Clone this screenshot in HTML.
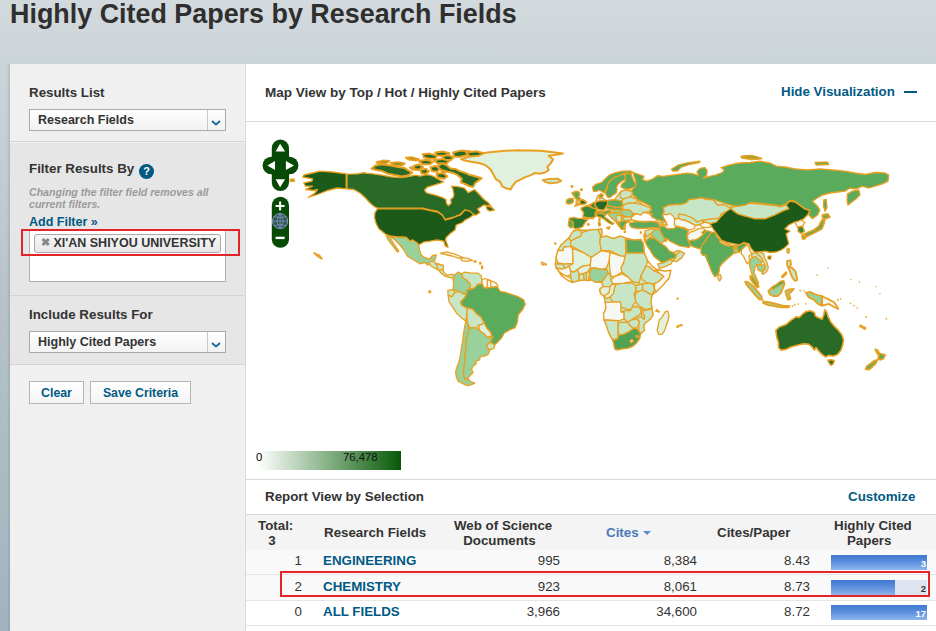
<!DOCTYPE html>
<html><head><meta charset="utf-8">
<style>
*{box-sizing:border-box;margin:0;padding:0}
html,body{width:936px;height:631px;overflow:hidden}
body{font-family:"Liberation Sans",Arial,sans-serif;background:linear-gradient(#d3dade 0,#cbd4d9 64px,#b4c1c9 330px,#a3b3bd 631px);position:relative;color:#333}
.strip{position:absolute;left:7px;top:64px;width:3px;height:567px;background:linear-gradient(90deg,rgba(90,110,125,0),rgba(90,110,125,.25))}
h1{position:absolute;left:10px;top:-1px;font-size:26.9px;font-weight:bold;color:#2f2f2f;white-space:nowrap}
.left{position:absolute;left:10px;top:64px;width:235px;height:567px;background:#f0f0f0}
.sec{position:absolute;left:0;width:235px}
.lbl{position:absolute;left:19px;font-size:13.33px;font-weight:bold;color:#333;white-space:nowrap}
.sel{position:absolute;left:19px;width:197px;height:22px;border:1px solid #a9a9a9;background:linear-gradient(#fff,#f2f2f2);font-size:12.5px;font-weight:bold;color:#333;line-height:21.5px;padding-left:8px}
.sel i{position:absolute;right:0;top:0;width:18px;height:20px;border-left:1px solid #c8c8c8}
.sel svg{position:absolute;right:4px;top:10px}
.btn{position:absolute;height:23px;border:1px solid #b5b5b5;background:linear-gradient(#fff,#f4f4f4);font-size:12.3px;font-weight:bold;color:#005a84;text-align:center;line-height:23.5px}
.main{position:absolute;left:246px;top:64px;width:690px;height:567px;background:#fff}
.t14{position:absolute;font-size:13.33px;font-weight:bold;color:#333;white-space:nowrap}
.t14.a{color:#005a84}
.hl{position:absolute;left:0;width:690px;height:1px;background:#d8d8d8}
.th{position:absolute;font-size:13.33px;font-weight:bold;color:#333;white-space:nowrap;line-height:15px}
.td{position:absolute;font-size:13.33px;color:#333;white-space:nowrap;line-height:20px}
.td.r{text-align:right}
.td.b{font-weight:bold;color:#005a84}
.bar{position:absolute;left:585px;width:96px;height:15px;background:linear-gradient(#3f78cf 0,#5b8fdd 45%,#8fb4ec 100%)}
.bar i{position:absolute;left:0;top:0;width:64px;height:15px;background:linear-gradient(#3f78cf 0,#5b8fdd 45%,#8fb4ec 100%)}
.bar b{position:absolute;right:1px;top:3px;font-size:9.5px;color:#fff;line-height:11px}
.a{color:#005a84}
</style></head><body>
<div class="strip"></div>
<h1>Highly Cited Papers by Research Fields</h1>
<div class="left">
  <div class="sec" style="top:0;height:78px;background:#f0f0f0;border-bottom:1px solid #d4d4d4"></div>
  <div class="lbl" style="top:21px">Results List</div>
  <div class="sel" style="top:45px">Research Fields<i></i><svg width="10" height="6" viewBox="0 0 10 6"><path d="M1 1 L5 4.5 L9 1" fill="none" stroke="#1a6a95" stroke-width="1.8"/></svg></div>

  <div class="sec" style="top:79px;height:153px;background:#e6e6e6;border-bottom:1px solid #d4d4d4"></div>
  <div class="lbl" style="top:97px">Filter Results By</div>
  <div style="position:absolute;left:129px;top:100px;width:15px;height:15px;border-radius:50%;background:#005a84;color:#fff;font-size:11px;font-weight:bold;text-align:center;line-height:15px">?</div>
  <div style="position:absolute;left:19px;top:123px;font-size:10.6px;font-style:italic;font-weight:bold;color:#9a9a9a;line-height:11.5px;white-space:nowrap">Changing the filter field removes all<br>current filters.</div>
  <div class="lbl a" style="top:151px;font-size:12.5px;color:#005a84">Add Filter »</div>
  <div style="position:absolute;left:19px;top:165px;width:197px;height:53px;background:#fff;border:1px solid #b0b0b0"></div>
  <div style="position:absolute;left:24px;top:170px;width:187px;height:19px;border:1px solid #aaa;border-radius:3px;background:linear-gradient(#f6f6f6,#e8e8e8);font-size:12.5px;font-weight:bold;color:#333;line-height:17px;white-space:nowrap;padding-left:6px"><span style="color:#888;font-size:11px;position:relative;top:-1px">✖</span> XI'AN SHIYOU UNIVERSITY</div>
  <div style="position:absolute;left:11px;top:165px;width:219px;height:27px;border:2px solid #e3242b"></div>

  <div class="sec" style="top:232px;height:69px;background:#e6e6e6;border-bottom:1px solid #d4d4d4"></div>
  <div class="lbl" style="top:243px">Include Results For</div>
  <div class="sel" style="top:267px">Highly Cited Papers<i></i><svg width="10" height="6" viewBox="0 0 10 6"><path d="M1 1 L5 4.5 L9 1" fill="none" stroke="#1a6a95" stroke-width="1.8"/></svg></div>

  <div class="btn" style="left:19px;top:317px;width:55px">Clear</div>
  <div class="btn" style="left:80px;top:317px;width:101px">Save Criteria</div>
</div>
<div class="main">
  <div style="position:absolute;left:-1px;top:0;width:1px;height:567px;background:#d9d9d9"></div>
  <div class="t14" style="left:19px;top:20.5px;font-size:13.5px">Map View by Top / Hot / Highly Cited Papers</div>
  <div class="t14 a" style="left:535px;top:20px">Hide Visualization</div>
  <div style="position:absolute;left:658px;top:27px;width:13px;height:2px;background:#005a84"></div>
  <div class="hl" style="top:57px"></div>
  <!--MAP--><svg style="position:absolute;left:0;top:0" width="690" height="400" viewBox="0 0 690 400" stroke="#e9a020" stroke-linejoin="round">
<path d="M441.6 175.2 L443.8 168.4 L458.8 165.4 L465.5 168.4 L473.7 175.9 L487.2 181.9 L500.7 179.7 L500.7 181.9 L495.4 186.4 L488.7 188.6 L473.7 202.8 L463.3 201.3 L455.0 184.9 L444.6 181.1Z" fill="#5aab5c" stroke-width="0.1"/>
<path d="M434.0 133.5 L469.0 135.5 L484.0 140.5 L504.0 138.0 L519.0 139.8 L540.2 139.8 L542.8 144.8 L529.0 151.0 L519.0 154.8 L481.5 146.0 L471.5 156.0 L464.0 159.8 L451.5 162.2 L434.0 164.8Z" fill="#c6e6c6" stroke-width="0.1"/>
<path d="M215.2 95.1 L223.4 92.5 L233.9 89.5 L245.9 88.0 L259.3 86.8 L271.3 86.2 L283.3 86.5 L293.7 86.8 L305.7 88.0 L316.9 89.5 L308.7 91.0 L302.7 91.7 L307.2 95.4 L304.2 99.9 L301.2 102.9 L302.7 105.9 L299.7 108.2 L293.7 109.7 L289.3 108.9 L284.8 111.1 L278.8 113.4 L274.3 115.6 L269.8 117.9 L266.8 121.6 L264.6 125.4 L260.8 124.6 L256.3 122.4 L254.1 117.9 L249.6 114.9 L247.4 110.4 L244.4 105.2 L239.9 101.4 L233.9 99.2 L224.9 97.7 L217.5 96.2Z" fill="#e0f1de" stroke-width="2.0"/>
<path d="M296.7 116.1 L302.7 114.9 L311.7 114.6 L314.7 116.4 L311.7 118.6 L304.2 119.4 L299.0 117.9Z" fill="#c6e6c6" stroke-width="1.8"/>
<path d="M125.4 104.7 L129.3 101.5 L135.7 100.2 L144.6 101.5 L152.3 103.1 L158.7 104.1 L162.6 106.6 L166.4 108.6 L162.6 111.1 L156.2 112.4 L148.5 111.1 L142.1 109.8 L136.9 107.3 L130.5 106.0Z" fill="#286a26" stroke-width="2.0"/>
<path d="M130.5 98.3 L136.9 96.6 L143.4 97.0 L140.8 98.9 L133.1 99.6Z" fill="#286a26" stroke-width="2.0"/>
<path d="M144.6 98.9 L152.3 98.3 L158.7 99.6 L156.2 101.3 L147.2 100.9Z" fill="#286a26" stroke-width="2.0"/>
<path d="M160.0 93.8 L165.2 93.2 L172.8 95.1 L170.3 96.4 L162.6 95.4Z" fill="#286a26" stroke-width="2.0"/>
<path d="M163.9 103.4 L170.3 102.8 L175.4 104.1 L172.8 106.0 L166.4 105.6Z" fill="#286a26" stroke-width="2.0"/>
<path d="M176.7 90.2 L183.2 89.6 L190.9 91.5 L189.6 94.7 L183.2 94.7 L178.0 93.4Z" fill="#286a26" stroke-width="2.0"/>
<path d="M207.0 88.5 L214.7 86.6 L223.7 87.2 L221.1 91.1 L213.4 93.0 L208.2 92.4Z" fill="#286a26" stroke-width="2.0"/>
<path d="M196.0 92.3 L202.4 91.0 L207.6 93.5 L205.0 96.1 L198.6 96.1Z" fill="#286a26" stroke-width="2.0"/>
<path d="M184.5 103.2 L189.6 101.9 L193.5 104.5 L191.5 107.7 L185.8 107.0Z" fill="#286a26" stroke-width="2.0"/>
<path d="M195.4 103.0 L199.9 102.3 L201.8 106.2 L198.6 108.7 L195.4 106.8Z" fill="#286a26" stroke-width="2.0"/>
<path d="M190.5 109.7 L196.9 109.1 L201.4 112.3 L198.2 114.8 L191.8 113.5Z" fill="#286a26" stroke-width="2.0"/>
<path d="M174.7 106.1 L179.8 104.8 L183.0 107.4 L179.8 109.9 L175.3 109.3Z" fill="#286a26" stroke-width="2.0"/>
<path d="M168.0 101.8 L173.1 100.5 L177.0 103.1 L173.1 105.7 L168.0 105.0Z" fill="#286a26" stroke-width="2.0"/>
<path d="M172.8 97.1 L180.5 95.8 L186.9 97.8 L184.3 100.3 L176.6 100.3Z" fill="#286a26" stroke-width="2.0"/>
<path d="M187.9 96.2 L195.6 94.9 L203.3 96.8 L200.7 99.4 L191.7 99.4Z" fill="#286a26" stroke-width="2.0"/>
<path d="M220.0 88.5 L230.2 87.2 L237.9 89.2 L232.8 91.7 L223.8 92.4Z" fill="#286a26" stroke-width="2.0"/>
<path d="M189.2 88.6 L196.9 87.5 L203.3 89.2 L198.2 91.8 L190.5 91.4Z" fill="#286a26" stroke-width="2.0"/>
<path d="M192.2 101.5 L196.3 99.4 L200.4 101.0 L204.5 104.6 L209.6 105.1 L213.7 107.1 L218.9 108.7 L223.0 110.7 L229.2 112.3 L235.8 114.3 L232.2 116.9 L229.2 119.0 L227.1 123.1 L223.0 122.0 L218.9 120.0 L214.8 118.4 L215.8 114.8 L211.7 111.2 L206.6 108.7 L201.4 107.7 L196.3 106.1 L193.2 104.6Z" fill="#286a26" stroke-width="2.0"/>
<path d="M101.0 110.2 L111.5 109.8 L119.0 108.5 L119.0 109.2 L126.7 109.8 L135.7 111.1 L144.6 112.8 L154.9 113.7 L163.9 112.4 L169.0 111.2 L174.7 112.2 L179.5 110.7 L184.2 111.2 L188.0 112.6 L192.8 115.5 L197.5 117.9 L193.7 119.3 L188.0 121.2 L181.4 123.1 L178.5 126.0 L180.4 128.8 L185.2 130.2 L190.9 131.7 L196.6 133.6 L199.9 135.5 L200.4 139.3 L202.3 141.7 L205.2 139.3 L204.7 135.5 L207.1 133.6 L208.0 130.7 L207.1 126.0 L205.6 122.2 L211.8 122.6 L218.5 124.1 L222.3 128.8 L228.5 125.5 L232.7 129.8 L237.5 135.0 L242.3 138.8 L245.1 142.1 L237.8 141.0 L234.0 143.5 L231.5 144.8 L234.0 148.5 L230.2 151.0 L224.0 150.5 L220.2 149.0 L219.0 146.0 L214.0 150.5 L206.5 153.5 L199.0 155.5 L196.5 151.0 L191.5 147.2 L184.0 146.0 L176.5 144.2 L131.5 144.2 L127.8 142.2 L123.5 138.5 L119.0 133.5 L114.0 129.0 L107.8 125.5 L101.0 124.8Z" fill="#286a26" stroke-width="1.3"/>
<path d="M240.2 142.2 L245.2 143.0 L248.5 146.0 L244.0 147.2 L241.0 145.5Z" fill="#286a26" stroke-width="1.3"/>
<path d="M100.2 109.8 L86.5 108.0 L74.0 107.2 L66.5 109.0 L57.8 111.0 L56.5 113.0 L66.5 114.8 L66.0 117.2 L57.8 119.0 L59.5 122.2 L66.5 122.2 L59.5 125.5 L67.8 126.5 L71.5 125.5 L69.0 129.0 L62.0 133.5 L71.5 130.5 L81.5 126.5 L91.5 124.0 L100.2 124.8Z" fill="#1c5a1a" stroke-width="1.3"/>
<path d="M131.5 144.8 L176.5 144.8 L184.0 146.5 L191.5 148.0 L196.5 151.5 L199.0 156.0 L206.5 154.0 L214.5 151.0 L219.0 146.0 L224.0 147.2 L227.8 150.5 L224.0 153.5 L219.0 156.0 L216.5 158.5 L210.2 161.0 L209.0 166.0 L204.0 169.8 L200.2 173.5 L199.5 176.0 L201.5 181.0 L202.0 183.5 L199.5 182.2 L197.8 177.2 L191.5 176.0 L184.0 177.2 L177.8 178.0 L172.8 181.0 L171.0 179.0 L166.5 176.0 L164.0 177.2 L160.2 173.5 L151.5 173.0 L144.0 172.2 L139.0 169.8 L132.8 164.8 L130.2 159.8 L128.5 153.5 L129.0 148.5Z" fill="#1c5a1a" stroke-width="1.3"/>
<path d="M144.0 172.2 L151.5 173.0 L160.2 173.5 L164.0 177.2 L166.5 176.0 L171.0 179.0 L172.8 181.0 L173.5 186.0 L175.2 191.0 L179.0 194.0 L184.0 194.8 L186.5 191.5 L190.2 191.0 L189.0 196.0 L185.2 199.0 L181.5 201.0 L179.0 198.5 L174.0 199.8 L167.8 196.0 L161.5 192.2 L157.8 186.0 L154.0 181.0 L149.0 176.0Z" fill="#98d29a" stroke-width="1.3"/>
<path d="M140.2 171.0 L144.0 173.5 L147.8 179.8 L152.8 187.2 L151.5 188.0 L145.2 179.8 L141.5 174.8Z" fill="#98d29a" stroke-width="1.3"/>
<path d="M182.5 198.5 L186.8 197.0 L190.0 199.5 L194.3 200.6 L197.5 201.7 L197.0 205.9 L198.5 209.2 L201.8 211.3 L206.0 210.2 L208.2 211.3 L207.1 214.1 L202.8 213.4 L198.5 211.9 L195.3 209.2 L192.1 205.9 L187.9 203.8 L184.6 201.7Z" fill="#c6e6c6" stroke-width="1.3"/>
<path d="M190.0 199.5 L194.3 200.6 L197.5 201.7 L197.0 205.9 L192.1 205.9Z" fill="#c6e6c6" stroke-width="1.3"/>
<path d="M194.3 189.3 L200.7 187.8 L208.2 189.9 L213.5 192.0 L217.8 194.2 L212.4 194.2 L206.0 192.0 L199.6 190.5Z" fill="#f6f8f4" stroke-width="1.3"/>
<path d="M214.6 194.2 L221.0 194.2 L226.4 196.3 L221.0 197.4 L215.7 196.7Z" fill="#f6f8f4" stroke-width="1.3"/>
<path d="M228.1 197.0 L230.0 197.0 L230.0 198.0 L228.1 198.0Z" fill="#f6f8f4" stroke-width="1.3"/>
<path d="M233.8 198.5 L234.9 198.5 L234.9 200.0 L233.8 200.0Z" fill="#f6f8f4" stroke-width="1.3"/>
<path d="M235.6 202.1 L236.6 202.1 L236.6 204.7 L235.6 204.7Z" fill="#f6f8f4" stroke-width="1.3"/>
<path d="M182.9 226.9 L184.6 226.9 L184.6 228.6 L182.9 228.6Z" fill="#f6f8f4" stroke-width="1.3"/>
<path d="M295.4 198.2 L298.4 199.1 L297.6 201.2 L295.9 200.4Z" fill="#f6f8f4" stroke-width="1.3"/>
<path d="M215.7 209.8 L218.9 208.1 L225.3 209.2 L231.7 209.2 L234.9 211.3 L236.0 215.6 L236.0 219.9 L231.7 220.5 L228.5 224.1 L224.2 224.8 L224.2 219.9 L221.0 216.6 L216.7 213.4Z" fill="#c6e6c6" stroke-width="1.3"/>
<path d="M236.0 215.6 L239.2 214.5 L244.5 216.6 L249.9 218.8 L252.0 222.0 L251.0 222.6 L244.5 223.5 L238.1 224.1 L236.0 219.9Z" fill="#f6f8f4" stroke-width="1.3"/>
<path d="M241.3 215.8 L244.5 216.6 L245.0 223.5 L241.3 223.9Z" fill="#f6f8f4" stroke-width="1.3"/>
<path d="M208.2 211.3 L212.4 208.1 L215.7 209.8 L216.7 213.4 L221.0 216.6 L224.2 219.9 L223.6 224.8 L221.0 226.3 L220.6 230.5 L216.7 229.5 L212.4 227.3 L207.1 225.6 L207.7 219.9 L207.1 215.6Z" fill="#98d29a" stroke-width="1.3"/>
<path d="M201.8 226.3 L207.1 225.6 L209.2 228.4 L206.0 232.7 L202.2 231.6Z" fill="#c6e6c6" stroke-width="1.3"/>
<path d="M202.2 231.6 L206.0 232.7 L209.2 228.4 L212.4 227.3 L216.7 229.5 L220.6 230.5 L217.8 234.8 L214.6 238.0 L215.7 241.2 L221.0 244.0 L221.0 249.8 L219.9 257.3 L215.7 254.1 L210.3 248.7 L206.0 242.3 L202.8 237.0Z" fill="#c6e6c6" stroke-width="1.3"/>
<path d="M221.0 244.0 L226.4 244.9 L229.6 248.7 L234.9 253.0 L238.1 258.4 L236.0 260.5 L232.8 261.1 L230.6 263.7 L224.2 264.1 L222.1 260.5 L221.0 254.1 L221.0 249.8Z" fill="#c6e6c6" stroke-width="1.3"/>
<path d="M232.8 261.1 L236.0 260.5 L238.1 258.4 L241.3 264.8 L244.5 268.0 L245.6 272.3 L241.3 273.3 L238.1 270.1 L233.8 266.9Z" fill="#e0f1de" stroke-width="1.3"/>
<path d="M219.9 257.3 L222.1 260.5 L223.1 264.8 L221.4 272.3 L220.0 276.0 L220.0 283.9 L219.2 291.9 L218.4 299.8 L217.6 306.1 L217.6 311.7 L219.2 315.6 L221.6 314.8 L224.7 317.5 L228.7 319.1 L225.5 320.7 L221.6 321.7 L216.8 319.6 L212.1 317.2 L210.2 312.5 L209.7 307.7 L210.8 303.7 L212.8 298.2 L214.4 291.1 L215.5 283.9 L216.8 276.0 L217.8 268.0 L218.9 261.6Z" fill="#98d29a" stroke-width="1.3"/>
<path d="M224.2 264.1 L230.6 263.7 L233.8 266.9 L238.1 270.1 L241.3 273.3 L245.6 272.3 L244.5 278.2 L241.3 280.8 L240.7 283.0 L243.8 286.3 L242.2 290.3 L239.0 291.9 L234.3 292.6 L233.5 295.8 L229.5 297.4 L230.3 299.8 L227.1 302.2 L225.5 305.3 L227.1 308.5 L223.9 311.7 L221.6 314.8 L219.2 315.6 L217.6 311.7 L217.6 306.1 L218.4 299.8 L219.2 291.9 L220.0 283.9 L220.0 276.0 L221.4 272.3 L223.1 264.8Z" fill="#98d29a" stroke-width="1.3"/>
<path d="M241.3 280.8 L244.5 278.2 L248.8 280.8 L247.7 284.7 L243.5 285.5 L240.7 283.0Z" fill="#c6e6c6" stroke-width="1.3"/>
<path d="M221.0 226.3 L228.5 224.1 L231.7 220.5 L236.0 219.9 L238.1 224.1 L244.5 223.5 L251.0 222.6 L254.2 227.3 L259.5 228.4 L265.9 230.5 L272.3 232.7 L277.7 235.9 L279.2 240.2 L276.6 245.5 L272.3 250.9 L271.3 258.4 L269.1 263.7 L263.8 265.8 L258.4 269.0 L255.2 274.4 L251.0 278.7 L248.8 280.8 L244.5 278.2 L246.7 273.3 L244.5 268.0 L241.3 264.8 L238.1 258.4 L234.9 253.0 L229.6 248.7 L226.4 244.9 L221.0 244.0 L215.7 241.2 L214.6 238.0 L217.8 234.8 L220.6 230.5Z" fill="#5aab5c" stroke-width="1.3"/>
<path d="M327.2 167.0 L333.2 165.8 L343.5 166.1 L352.0 165.3 L355.5 164.8 L356.3 169.6 L354.6 173.0 L360.6 172.1 L367.4 174.7 L374.3 172.1 L379.4 173.8 L388.0 176.1 L394.8 175.5 L397.4 179.8 L398.2 189.2 L401.7 196.9 L405.1 201.2 L410.2 205.5 L418.8 207.2 L424.8 206.3 L423.1 214.0 L417.1 220.9 L410.2 227.7 L405.9 231.2 L405.1 238.0 L405.9 244.0 L406.3 244.8 L406.9 251.3 L403.9 255.4 L399.2 258.9 L397.5 262.4 L398.6 266.0 L394.5 270.1 L393.4 274.8 L390.4 278.9 L386.3 282.4 L381.6 284.2 L375.7 284.8 L371.6 285.9 L368.7 284.8 L368.1 280.7 L366.9 276.5 L362.8 268.9 L360.5 261.9 L358.1 256.0 L357.5 250.1 L359.9 244.2 L359.3 238.4 L358.9 238.0 L358.0 232.0 L354.6 229.4 L353.8 225.2 L357.2 222.6 L355.5 218.3 L349.5 218.3 L345.2 215.8 L342.6 216.6 L338.4 215.8 L332.9 216.6 L326.4 218.3 L321.2 215.8 L316.1 212.3 L313.5 208.1 L310.1 203.8 L309.3 200.0 L310.1 193.5 L311.8 186.7 L315.3 180.7 L323.0 173.8Z" fill="#c6e6c6" stroke-width="1.3"/>
<path d="M327.2 167.0 L333.2 165.8 L335.8 168.7 L334.9 172.1 L329.8 174.3 L324.7 177.3 L323.0 173.8Z" fill="#c6e6c6" stroke-width="1.3"/>
<path d="M311.8 186.7 L315.3 180.7 L323.0 173.8 L324.7 177.3 L324.7 182.4 L317.8 183.2 L317.0 186.7Z" fill="#c6e6c6" stroke-width="1.3"/>
<path d="M335.8 168.7 L343.5 166.1 L352.0 165.3 L354.6 171.3 L353.8 178.1 L355.5 186.7 L345.2 193.5 L338.4 189.2 L324.7 181.5 L324.7 177.3 L329.8 174.3 L334.9 172.1Z" fill="#c6e6c6" stroke-width="1.3"/>
<path d="M352.0 165.3 L355.5 164.8 L356.3 169.6 L354.6 173.0 L354.6 171.3Z" fill="#c6e6c6" stroke-width="1.3"/>
<path d="M354.6 173.0 L360.6 172.1 L367.4 174.7 L374.3 172.1 L379.4 173.8 L379.8 192.7 L374.3 191.8 L364.0 186.7 L355.5 186.7 L353.8 178.1Z" fill="#c6e6c6" stroke-width="1.3"/>
<path d="M379.8 175.0 L388.0 176.1 L394.8 175.5 L397.4 179.8 L398.2 189.2 L380.8 189.2Z" fill="#5aab5c" stroke-width="1.3"/>
<path d="M311.8 186.7 L317.0 186.7 L317.8 183.2 L324.7 182.4 L326.4 184.1 L327.2 199.5 L317.0 200.0 L311.8 198.6 L310.1 193.5Z" fill="#f6f8f4" stroke-width="1.3"/>
<path d="M326.4 184.1 L338.4 189.2 L345.2 193.5 L344.3 201.2 L336.6 202.1 L331.5 205.5 L328.1 208.1 L324.7 207.2 L323.0 202.1 L327.2 199.5Z" fill="#e0f1de" stroke-width="1.3"/>
<path d="M345.2 193.5 L355.5 186.7 L364.0 188.4 L363.2 196.9 L360.6 203.8 L355.5 205.5 L348.6 203.8 L344.3 203.8 L344.3 201.2Z" fill="#f6f8f4" stroke-width="1.3"/>
<path d="M364.0 188.4 L374.3 191.8 L379.8 192.7 L377.7 198.6 L375.1 203.8 L376.0 208.1 L369.2 212.3 L364.9 212.3 L364.0 206.3 L363.2 196.9Z" fill="#f6f8f4" stroke-width="1.3"/>
<path d="M379.8 189.2 L398.2 189.2 L401.7 196.9 L400.0 202.1 L397.4 207.2 L394.8 212.3 L393.1 219.2 L386.3 217.5 L381.1 212.3 L376.0 208.1 L375.1 203.8 L377.7 198.6Z" fill="#c6e6c6" stroke-width="1.3"/>
<path d="M401.7 196.9 L405.1 201.2 L410.2 205.5 L408.5 207.2 L403.4 202.9 L400.0 202.1Z" fill="#f6f8f4" stroke-width="1.3"/>
<path d="M400.0 202.1 L403.4 202.9 L408.5 207.2 L412.8 208.9 L417.9 212.3 L412.8 217.5 L406.8 220.0 L401.7 219.2 L396.5 215.8 L394.8 212.3 L397.4 207.2Z" fill="#c6e6c6" stroke-width="1.3"/>
<path d="M410.2 205.5 L418.8 207.2 L424.8 206.3 L423.1 214.0 L417.1 220.9 L410.2 227.7 L408.5 225.2 L408.5 220.0 L412.8 217.5 L417.9 212.3 L412.8 208.9Z" fill="#f6f8f4" stroke-width="1.3"/>
<path d="M396.5 220.0 L401.7 219.2 L406.8 220.0 L408.5 225.2 L405.9 231.2 L401.7 228.6 L396.5 226.0Z" fill="#c6e6c6" stroke-width="1.3"/>
<path d="M389.7 221.7 L396.5 220.0 L396.5 226.0 L392.3 227.7 L389.7 226.9Z" fill="#c6e6c6" stroke-width="1.3"/>
<path d="M389.7 229.4 L392.3 227.7 L396.5 226.0 L401.7 228.6 L405.9 231.2 L405.1 238.0 L405.9 244.0 L400.0 245.7 L394.8 243.1 L389.7 238.0 L388.8 232.9Z" fill="#c6e6c6" stroke-width="1.3"/>
<path d="M370.0 220.0 L377.7 219.2 L386.3 219.2 L389.7 221.7 L389.7 226.9 L388.0 229.4 L388.8 232.9 L389.7 238.0 L386.3 241.4 L388.0 246.6 L384.6 245.7 L379.4 244.8 L374.3 242.3 L374.3 238.9 L367.4 238.0 L364.9 235.4 L364.0 232.9 L367.4 229.4 L368.3 224.3Z" fill="#c6e6c6" stroke-width="1.3"/>
<path d="M364.9 215.8 L369.2 212.3 L376.0 209.8 L381.1 212.3 L386.3 217.5 L377.7 219.2 L370.0 220.0 L366.6 220.0Z" fill="#f6f8f4" stroke-width="1.3"/>
<path d="M344.3 205.5 L348.6 203.8 L355.5 205.5 L360.6 205.1 L362.3 208.9 L358.9 214.0 L355.5 217.5 L349.5 218.3 L345.2 215.8 L343.1 212.3Z" fill="#98d29a" stroke-width="1.3"/>
<path d="M362.3 208.9 L364.9 212.3 L364.9 215.8 L366.6 220.0 L364.0 222.6 L357.2 222.6 L355.5 218.3 L358.9 214.0Z" fill="#c6e6c6" stroke-width="1.3"/>
<path d="M353.8 225.2 L357.2 222.6 L364.0 222.6 L366.6 220.0 L370.0 220.0 L368.3 224.3 L367.4 229.4 L364.0 232.9 L360.6 234.6 L358.0 232.0 L354.6 229.4Z" fill="#e0f1de" stroke-width="1.3"/>
<path d="M357.2 222.6 L364.0 222.6 L363.2 228.6 L358.0 232.0 L354.6 229.4 L353.8 225.2Z" fill="#e0f1de" stroke-width="1.3"/>
<path d="M309.3 200.0 L317.0 200.0 L318.7 204.6 L314.4 205.1 L310.1 203.8Z" fill="#c6e6c6" stroke-width="1.3"/>
<path d="M310.1 203.8 L314.4 205.1 L318.7 204.6 L323.0 202.1 L324.7 207.2 L324.7 210.6 L321.2 212.3 L317.0 210.6 L313.5 208.1Z" fill="#f6f8f4" stroke-width="1.3"/>
<path d="M324.7 210.6 L324.7 207.2 L328.1 208.1 L331.5 205.5 L333.2 210.6 L332.9 216.6 L326.4 218.3 L324.7 214.0Z" fill="#c6e6c6" stroke-width="1.3"/>
<path d="M331.5 205.5 L336.6 202.1 L344.3 201.2 L344.3 203.8 L341.8 208.1 L333.2 210.6Z" fill="#e0f1de" stroke-width="1.3"/>
<path d="M333.2 210.6 L337.5 209.8 L338.4 215.8 L332.9 216.6Z" fill="#c6e6c6" stroke-width="1.3"/>
<path d="M337.5 209.8 L341.8 208.1 L344.3 205.5 L343.1 212.3 L342.6 216.6 L338.4 215.8Z" fill="#c6e6c6" stroke-width="1.3"/>
<path d="M340.1 209.3 L341.8 208.1 L344.3 205.5 L343.1 212.3 L342.6 216.6 L340.6 216.1Z" fill="#c6e6c6" stroke-width="1.3"/>
<path d="M313.5 208.1 L317.0 210.6 L321.2 212.3 L324.7 214.0 L326.4 218.3 L321.2 215.8 L316.1 212.3Z" fill="#f6f8f4" stroke-width="1.3"/>
<path d="M308.8 179.0 L309.8 179.0 L309.8 180.0 L308.8 180.0Z" fill="#f6f8f4" stroke-width="1.3"/>
<path d="M299.3 199.8 L300.4 199.8 L300.4 200.9 L299.3 200.9Z" fill="#f6f8f4" stroke-width="1.3"/>
<path d="M410.6 246.0 L411.6 246.0 L411.6 247.1 L410.6 247.1Z" fill="#f6f8f4" stroke-width="1.3"/>
<path d="M431.1 234.1 L432.1 234.1 L432.1 235.1 L431.1 235.1Z" fill="#f6f8f4" stroke-width="1.3"/>
<path d="M432.0 261.4 L433.0 261.4 L433.0 262.5 L432.0 262.5Z" fill="#f6f8f4" stroke-width="1.3"/>
<path d="M434.9 260.6 L435.9 260.6 L435.9 261.6 L434.9 261.6Z" fill="#f6f8f4" stroke-width="1.3"/>
<path d="M359.3 238.4 L374.6 237.8 L375.1 247.8 L378.1 248.3 L378.1 254.8 L373.4 256.6 L358.1 256.0 L357.5 250.1 L359.9 244.2Z" fill="#f6f8f4" stroke-width="1.3"/>
<path d="M358.1 256.0 L372.2 256.9 L372.2 266.0 L371.6 274.8 L366.3 275.4 L362.8 268.9 L360.5 261.9Z" fill="#c6e6c6" stroke-width="1.3"/>
<path d="M372.2 259.5 L374.6 258.3 L381.6 258.3 L384.5 261.9 L387.5 264.2 L384.0 267.1 L378.1 270.1 L372.8 271.3 L372.2 266.0Z" fill="#c6e6c6" stroke-width="1.3"/>
<path d="M381.6 258.3 L385.1 256.0 L390.4 254.8 L393.4 257.2 L392.8 261.3 L390.4 263.6 L387.5 264.2 L384.5 261.9Z" fill="#c6e6c6" stroke-width="1.3"/>
<path d="M375.1 247.8 L379.3 246.6 L384.5 246.6 L386.3 243.1 L391.0 242.5 L394.5 244.8 L395.1 248.9 L392.2 251.9 L388.7 253.6 L385.1 256.0 L381.6 258.3 L378.1 254.8 L378.1 248.3Z" fill="#c6e6c6" stroke-width="1.3"/>
<path d="M395.1 247.2 L400.4 246.0 L406.3 244.8 L406.9 251.3 L403.9 255.4 L399.2 258.9 L397.5 262.4 L398.6 266.0 L394.5 269.5 L392.8 267.1 L392.8 261.3 L393.4 257.2 L390.4 254.8 L395.1 252.5 L398.1 255.4 L398.6 252.5 L396.3 248.9Z" fill="#c6e6c6" stroke-width="1.3"/>
<path d="M394.5 244.2 L396.3 244.8 L396.9 248.9 L398.6 252.5 L398.1 255.4 L396.3 253.6 L395.1 248.9Z" fill="#c6e6c6" stroke-width="1.3"/>
<path d="M366.9 276.5 L371.6 274.8 L372.8 271.3 L378.1 270.1 L384.0 267.1 L387.5 264.8 L390.4 264.2 L392.8 267.1 L394.5 270.1 L393.4 274.8 L390.4 278.9 L386.3 282.4 L381.6 284.2 L375.7 284.8 L371.6 285.9 L368.7 284.8 L368.1 280.7Z" fill="#4fa353" stroke-width="1.3"/>
<path d="M383.7 276.5 L386.3 275.4 L387.7 277.1 L385.1 278.9Z" fill="#f6f8f4" stroke-width="1.3"/>
<path d="M390.2 271.3 L391.9 271.3 L391.9 273.4 L390.2 273.4Z" fill="#f6f8f4" stroke-width="1.3"/>
<path d="M419.2 247.8 L421.6 247.2 L423.0 251.3 L422.2 256.0 L420.4 261.3 L418.6 266.6 L416.3 270.1 L412.8 270.3 L411.2 266.6 L412.2 261.3 L413.3 256.0 L415.7 253.6 L417.5 250.7Z" fill="#e0f1de" stroke-width="1.3"/>
<path d="M410.0 246.3 L411.2 246.3 L411.2 247.3 L410.0 247.3Z" fill="#f6f8f4" stroke-width="1.3"/>
<path d="M411.9 247.2 L413.1 247.2 L413.1 248.0 L411.9 248.0Z" fill="#f6f8f4" stroke-width="1.3"/>
<path d="M431.0 262.3 L432.1 262.3 L432.1 263.3 L431.0 263.3Z" fill="#f6f8f4" stroke-width="1.3"/>
<path d="M434.1 260.8 L435.3 260.8 L435.3 261.7 L434.1 261.7Z" fill="#f6f8f4" stroke-width="1.3"/>
<path d="M601.5 129.8 L606.5 127.2 L612.8 126.0 L614.0 131.0 L610.2 134.8 L605.2 138.5 L602.0 141.0 L601.0 136.0Z" fill="#5aab5c" stroke-width="1.3"/>
<path d="M577.8 136.0 L580.2 135.5 L581.0 143.5 L579.0 147.2 L577.5 142.2Z" fill="#5aab5c" stroke-width="1.3"/>
<path d="M495.2 92.2 L506.5 91.5 L515.2 94.8 L505.2 95.5 L496.5 94.0Z" fill="#5aab5c" stroke-width="1.3"/>
<path d="M569.0 98.5 L581.5 98.0 L582.8 100.5 L570.2 101.0Z" fill="#5aab5c" stroke-width="1.3"/>
<path d="M516.5 103.5 L526.5 101.5 L527.8 103.5Z" fill="#5aab5c" stroke-width="1.3"/>
<path d="M484.0 143.5 L491.5 142.2 L499.0 141.0 L504.0 139.0 L511.5 139.8 L519.0 140.5 L529.0 141.5 L534.0 143.0 L540.2 141.0 L542.8 144.8 L536.5 147.2 L529.0 151.0 L519.0 154.8 L509.0 154.8 L499.0 152.2 L491.5 149.8 L486.5 146.0Z" fill="#c6e6c6" stroke-width="1.3"/>
<path d="M464.0 159.8 L471.5 156.0 L476.5 151.0 L481.5 146.0 L485.2 144.8 L487.8 147.2 L491.5 149.8 L499.0 152.2 L509.0 154.8 L519.0 154.8 L529.0 151.0 L536.5 147.2 L542.8 144.8 L540.2 140.5 L544.0 137.2 L549.0 138.0 L554.0 141.5 L559.0 145.2 L564.0 146.5 L561.5 151.0 L557.8 154.8 L552.8 157.2 L547.8 158.5 L542.8 161.0 L539.0 164.8 L544.0 167.2 L540.2 169.8 L541.5 174.8 L542.8 179.8 L539.0 183.5 L535.2 186.0 L530.2 188.0 L524.0 188.5 L519.0 187.2 L514.0 188.0 L509.0 188.5 L505.2 184.8 L502.8 179.8 L497.8 178.5 L494.0 181.0 L487.8 179.8 L481.5 178.5 L475.2 176.0 L471.5 171.0 L467.8 166.0Z" fill="#1c5a1a" stroke-width="1.3"/>
<path d="M541.0 184.8 L543.5 184.8 L543.0 189.0 L541.0 188.5Z" fill="#98d29a" stroke-width="1.3"/>
<path d="M522.0 192.2 L525.2 192.2 L524.5 195.2 L522.0 194.8Z" fill="#1c5a1a" stroke-width="1.3"/>
<path d="M549.0 158.5 L555.2 156.0 L559.0 158.5 L556.5 162.2 L551.5 163.0Z" fill="#f6f8f4" stroke-width="1.3"/>
<path d="M552.0 163.0 L556.5 162.2 L558.5 167.2 L555.2 169.8 L552.0 167.2Z" fill="#3a8a3a" stroke-width="1.3"/>
<path d="M556.5 171.0 L561.5 168.5 L567.8 166.0 L572.8 162.2 L576.0 156.0 L579.0 154.8 L577.8 159.8 L576.0 164.8 L571.5 167.2 L566.5 169.8 L561.5 172.2 L557.8 174.0Z" fill="#5aab5c" stroke-width="1.8"/>
<path d="M576.5 151.0 L581.5 149.8 L584.0 153.0 L579.0 154.8 L576.5 153.5Z" fill="#5aab5c" stroke-width="1.8"/>
<path d="M556.0 172.2 L559.5 171.5 L559.0 174.8 L556.5 174.8Z" fill="#5aab5c" stroke-width="1.8"/>
<path d="M386.8 108.4 L391.6 110.0 L398.0 112.4 L396.4 115.6 L401.2 117.2 L406.9 114.8 L411.7 111.6 L417.3 112.4 L422.1 111.6 L428.5 110.8 L434.9 110.0 L441.3 109.2 L447.7 110.0 L452.5 111.6 L450.9 107.6 L454.1 104.4 L458.9 103.6 L461.3 106.8 L460.5 111.6 L457.3 114.0 L463.7 112.4 L470.2 110.8 L476.6 108.4 L478.2 106.0 L475.0 103.6 L483.0 101.2 L489.4 99.6 L494.0 99.0 L504.0 98.5 L514.0 97.2 L524.0 99.0 L530.2 102.2 L539.0 103.0 L549.0 104.8 L561.5 106.0 L574.0 104.8 L586.5 106.0 L599.0 107.2 L609.0 109.0 L619.0 110.5 L629.0 108.5 L639.0 109.0 L642.8 111.0 L642.0 117.2 L636.5 119.8 L629.0 122.2 L622.8 124.0 L616.5 122.2 L610.2 124.8 L604.0 124.0 L599.0 127.2 L591.5 128.0 L584.0 129.0 L576.5 131.0 L570.2 134.8 L566.5 137.2 L571.5 142.2 L574.0 146.0 L571.5 151.0 L566.5 154.8 L562.8 151.0 L564.0 146.0 L559.0 144.8 L554.0 141.0 L549.0 137.2 L544.0 136.5 L540.2 139.8 L534.0 142.2 L529.0 141.0 L519.0 139.8 L511.5 139.0 L504.0 138.5 L499.0 141.0 L491.5 142.2 L484.0 141.0 L476.5 138.5 L469.0 136.0 L461.5 134.8 L455.7 133.8 L449.3 134.9 L442.9 135.7 L440.5 138.9 L434.9 140.5 L428.5 140.5 L422.1 141.3 L417.3 143.7 L418.1 147.7 L416.5 150.1 L417.3 153.3 L419.7 157.3 L415.7 156.8 L410.9 155.7 L406.1 154.9 L404.4 152.0 L406.9 150.1 L402.8 149.3 L405.2 146.1 L404.4 142.1 L398.0 138.9 L391.6 135.7 L389.2 132.5 L384.4 130.9 L383.6 128.0 L386.8 125.3 L389.2 122.1 L390.0 117.2 L388.1 112.4Z" fill="#5aab5c" stroke-width="1.3"/>
<path d="M425.3 105.2 L431.7 101.2 L441.3 98.8 L454.1 97.2 L453.3 98.5 L442.9 100.7 L434.9 103.3 L431.7 106.8 L426.9 107.2Z" fill="#5aab5c" stroke-width="1.3"/>
<path d="M495.0 92.7 L502.2 91.6 L510.2 92.7 L515.8 94.3 L510.2 94.8 L502.2 94.0 L495.8 94.0Z" fill="#5aab5c" stroke-width="1.3"/>
<path d="M417.3 143.7 L422.1 141.3 L428.5 140.5 L434.9 140.5 L440.5 138.9 L442.9 135.7 L449.3 134.9 L455.7 133.8 L460.5 135.7 L466.9 135.7 L471.8 141.3 L478.2 140.5 L484.6 144.5 L479.8 147.7 L475.0 150.1 L473.4 154.1 L466.9 154.9 L460.5 155.7 L455.7 156.5 L450.9 158.1 L447.7 154.9 L442.9 152.5 L438.1 150.9 L433.3 150.1 L432.5 154.1 L428.5 154.9 L426.9 151.7 L423.7 149.3 L420.5 150.9 L417.3 150.1 L418.1 147.7Z" fill="#c6e6c6" stroke-width="1.3"/>
<path d="M432.5 150.1 L438.1 150.9 L442.9 152.5 L447.7 154.9 L450.9 158.1 L455.7 156.5 L458.9 158.1 L454.1 160.5 L449.3 161.3 L444.5 158.9 L439.7 156.5 L434.9 155.7 L432.5 154.1Z" fill="#c6e6c6" stroke-width="1.3"/>
<path d="M428.5 155.7 L432.5 154.1 L434.9 155.7 L439.7 156.5 L444.5 158.9 L449.3 161.3 L448.5 164.5 L442.9 166.1 L438.1 163.7 L433.3 162.9 L428.5 161.3Z" fill="#f6f8f4" stroke-width="1.3"/>
<path d="M455.7 156.5 L460.5 155.7 L466.9 154.9 L473.4 154.1 L470.2 158.1 L463.7 159.7 L458.9 158.1Z" fill="#c6e6c6" stroke-width="1.3"/>
<path d="M454.1 160.5 L458.9 158.1 L463.7 159.7 L465.3 162.9 L460.5 163.7 L455.7 162.9Z" fill="#f6f8f4" stroke-width="1.3"/>
<path d="M406.1 154.9 L410.9 155.7 L415.7 156.8 L416.5 158.9 L411.7 158.9 L407.7 157.3Z" fill="#c6e6c6" stroke-width="1.3"/>
<path d="M411.7 158.9 L416.5 158.9 L419.7 157.3 L421.3 161.3 L416.5 160.5 L413.3 161.3Z" fill="#c6e6c6" stroke-width="1.3"/>
<path d="M383.6 158.9 L390.0 157.3 L398.0 158.1 L406.1 157.3 L411.7 158.9 L413.3 161.3 L414.1 164.5 L406.1 163.7 L398.0 164.5 L391.6 164.5 L386.0 163.7 L383.6 161.3Z" fill="#5aab5c" stroke-width="1.3"/>
<path d="M344.0 140.6 L349.6 137.8 L351.7 131.6 L355.8 133.7 L360.7 136.7 L368.4 135.7 L374.7 127.4 L379.6 126.0 L385.8 127.4 L386.5 130.2 L389.3 134.4 L396.3 140.6 L405.4 144.8 L403.3 147.6 L397.7 148.3 L394.9 151.1 L390.0 149.7 L387.2 151.8 L385.1 156.0 L383.0 157.4 L379.6 159.5 L378.9 165.7 L375.4 165.0 L372.6 161.6 L369.8 157.4 L365.6 153.9 L362.1 149.0 L355.8 146.9 L350.5 147.6 L347.5 154.6 L339.8 154.6 L337.0 153.2 L337.7 149.0 L334.9 144.1Z" fill="#c6e6c6" stroke-width="1.3"/>
<path d="M346.4 123.2 L349.6 120.4 L355.8 118.3 L360.0 114.1 L364.2 110.6 L369.8 108.6 L376.8 107.2 L383.7 106.9 L386.5 107.9 L385.1 109.9 L380.9 109.2 L376.8 109.9 L372.6 112.0 L368.4 113.4 L365.6 115.5 L362.8 118.3 L361.4 121.8 L360.0 125.3 L358.6 128.8 L355.8 127.4 L353.1 126.0 L350.3 127.4 L347.5 127.4Z" fill="#5aab5c" stroke-width="1.3"/>
<path d="M362.8 118.3 L365.6 115.5 L368.4 113.4 L372.6 112.0 L376.8 109.9 L378.9 111.3 L379.6 115.5 L376.1 116.9 L372.6 119.7 L370.5 123.2 L371.2 126.0 L369.8 129.5 L367.0 130.9 L364.9 133.0 L362.1 133.7 L360.0 130.9 L359.3 128.8 L360.7 125.3 L361.4 121.8Z" fill="#5aab5c" stroke-width="1.3"/>
<path d="M378.9 111.3 L380.9 109.2 L385.1 109.9 L386.5 114.1 L388.6 118.3 L390.0 121.8 L386.5 123.9 L382.3 125.3 L377.5 124.6 L374.7 122.5 L376.1 119.7 L379.6 116.9 L379.6 115.5Z" fill="#5aab5c" stroke-width="1.3"/>
<path d="M374.7 127.4 L379.6 126.0 L385.8 127.4 L386.5 130.2 L383.7 133.0 L376.8 135.1 L374.0 133.0Z" fill="#c6e6c6" stroke-width="1.3"/>
<path d="M376.8 135.1 L383.7 133.0 L389.3 134.4 L391.4 136.4 L389.3 139.2 L382.3 139.2 L376.8 141.3 L376.1 137.1Z" fill="#c6e6c6" stroke-width="1.3"/>
<path d="M376.8 141.3 L382.3 139.2 L389.3 139.2 L396.3 140.6 L403.3 143.4 L405.4 144.8 L403.3 147.6 L397.7 148.3 L394.9 151.1 L390.0 149.7 L387.2 149.7 L383.7 146.2 L376.8 145.5Z" fill="#c6e6c6" stroke-width="1.3"/>
<path d="M361.4 136.7 L368.4 135.7 L376.1 137.1 L376.8 141.3 L374.7 143.4 L368.4 143.4 L361.4 141.3Z" fill="#5aab5c" stroke-width="1.3"/>
<path d="M360.7 141.3 L368.4 143.4 L374.7 143.4 L376.8 145.5 L374.0 148.3 L367.7 149.0 L367.7 145.5 L362.1 144.8 L360.0 143.4Z" fill="#5aab5c" stroke-width="1.3"/>
<path d="M367.7 145.5 L376.8 145.5 L374.0 148.3 L367.7 149.0Z" fill="#98d29a" stroke-width="1.3"/>
<path d="M362.1 149.0 L367.7 149.0 L374.0 148.3 L376.8 151.1 L375.4 156.0 L376.8 160.2 L375.4 165.0 L372.6 161.6 L369.8 157.4 L365.6 153.9 L362.8 151.1Z" fill="#98d29a" stroke-width="1.3"/>
<path d="M369.8 151.8 L375.4 151.1 L375.4 156.0 L376.8 160.2 L372.6 159.5 L370.5 156.0Z" fill="#c6e6c6" stroke-width="1.3"/>
<path d="M374.0 148.3 L376.8 145.5 L383.7 146.2 L387.2 149.7 L385.8 152.5 L379.6 153.2 L376.8 151.1Z" fill="#98d29a" stroke-width="1.3"/>
<path d="M376.8 153.2 L379.6 153.2 L385.8 152.5 L385.1 156.0 L378.2 156.7Z" fill="#c6e6c6" stroke-width="1.3"/>
<path d="M372.6 158.1 L378.2 156.7 L383.0 157.4 L379.6 159.5 L377.5 162.9 L378.9 165.7 L375.4 165.0 L373.3 161.6Z" fill="#5aab5c" stroke-width="1.3"/>
<path d="M387.2 151.8 L390.0 149.7 L394.9 151.1 L397.7 148.3 L403.3 149.7 L406.1 153.2 L411.6 156.0 L410.2 157.4 L403.3 157.4 L392.1 157.1 L386.5 156.0 L385.1 153.9Z" fill="#ffffff" stroke-width="1.3"/>
<path d="M314.1 116.4 L315.3 116.4 L315.3 117.5 L314.1 117.5Z" fill="#f6f8f4" stroke-width="1.3"/>
<path d="M325.3 121.7 L326.4 121.7 L326.4 122.8 L325.3 122.8Z" fill="#f6f8f4" stroke-width="1.3"/>
<path d="M335.1 125.0 L336.2 125.0 L336.2 126.1 L335.1 126.1Z" fill="#f6f8f4" stroke-width="1.3"/>
<path d="M342.0 159.9 L343.1 159.9 L343.1 161.0 L342.0 161.0Z" fill="#f6f8f4" stroke-width="1.3"/>
<path d="M378.3 167.3 L379.4 167.3 L379.4 168.4 L378.3 168.4Z" fill="#f6f8f4" stroke-width="1.3"/>
<path d="M394.3 168.0 L395.5 168.0 L395.5 169.1 L394.3 169.1Z" fill="#f6f8f4" stroke-width="1.3"/>
<path d="M399.0 177.4 L403.4 173.7 L410.2 175.2 L415.4 179.7 L419.9 182.6 L423.6 187.1 L427.4 188.6 L430.4 190.9 L429.6 193.9 L424.4 195.4 L419.9 197.6 L416.2 199.1 L412.4 196.1 L407.9 192.4 L404.2 186.4 L401.2 181.9Z" fill="#5aab5c" stroke-width="1.3"/>
<path d="M411.7 199.8 L416.2 199.1 L419.9 197.6 L424.4 195.4 L426.6 196.9 L425.1 199.8 L418.4 202.8 L413.2 204.3Z" fill="#c6e6c6" stroke-width="1.3"/>
<path d="M426.6 196.9 L429.6 193.9 L430.4 190.9 L434.1 187.1 L438.6 189.4 L435.6 193.9 L430.4 197.6Z" fill="#c6e6c6" stroke-width="1.3"/>
<path d="M427.4 188.6 L431.9 186.4 L434.1 187.1 L430.4 190.9Z" fill="#c6e6c6" stroke-width="1.3"/>
<path d="M404.9 169.9 L408.7 165.4 L413.9 166.2 L416.2 170.7 L419.1 175.2 L417.7 177.4 L415.4 179.7 L410.2 175.2 L406.4 172.9Z" fill="#98d29a" stroke-width="1.3"/>
<path d="M399.0 166.9 L406.4 164.7 L408.7 165.4 L404.9 169.9 L401.2 172.2 L399.0 169.9Z" fill="#c6e6c6" stroke-width="1.3"/>
<path d="M399.0 172.9 L401.2 172.2 L404.9 169.9 L406.4 172.9 L403.4 173.7 L399.0 177.4Z" fill="#c6e6c6" stroke-width="1.3"/>
<path d="M397.8 170.7 L399.0 169.9 L399.0 177.4 L398.1 174.4Z" fill="#98d29a" stroke-width="1.3"/>
<path d="M413.9 161.7 L418.4 162.5 L421.4 164.7 L427.4 164.7 L430.4 162.5 L434.9 163.9 L439.3 164.7 L442.3 166.9 L440.8 170.7 L441.6 175.2 L443.1 178.2 L444.6 181.1 L443.1 183.4 L437.8 182.6 L433.4 181.9 L428.9 179.7 L424.4 177.4 L420.6 174.4 L419.1 175.2 L416.2 170.7 L413.9 166.2Z" fill="#5aab5c" stroke-width="1.3"/>
<path d="M418.7 175.6 L420.6 175.9 L419.9 177.7 L418.4 177.1Z" fill="#c6e6c6" stroke-width="1.3"/>
<path d="M441.6 170.7 L443.8 168.4 L448.3 166.9 L452.8 164.7 L457.3 163.9 L458.8 166.2 L455.8 168.4 L457.3 170.7 L453.5 173.7 L449.8 175.9 L443.8 176.7 L441.6 175.2Z" fill="#f6f8f4" stroke-width="1.3"/>
<path d="M443.1 178.2 L443.8 176.7 L449.8 175.9 L453.5 173.7 L457.3 170.7 L458.8 168.4 L462.5 166.9 L465.5 168.4 L463.3 171.4 L461.0 174.4 L458.8 178.2 L455.8 181.1 L455.0 184.9 L451.3 184.1 L446.8 182.6 L444.6 181.1Z" fill="#5aab5c" stroke-width="1.3"/>
<path d="M463.3 171.4 L465.5 168.4 L469.3 168.4 L470.7 172.2 L473.7 175.9 L479.0 178.9 L484.2 181.1 L487.2 181.9 L487.2 184.9 L490.2 182.6 L492.4 181.1 L496.2 179.7 L499.2 178.9 L500.7 181.1 L497.7 183.4 L495.4 186.4 L493.2 188.6 L490.9 185.6 L488.7 188.6 L485.7 190.9 L481.2 194.6 L476.7 198.3 L473.7 202.8 L473.0 208.1 L470.7 211.8 L468.5 212.6 L465.5 207.3 L463.3 201.3 L461.0 195.4 L460.3 190.9 L457.3 191.6 L455.0 189.4 L455.0 184.9 L455.8 181.1 L458.8 178.2 L461.0 174.4Z" fill="#5aab5c" stroke-width="1.3"/>
<path d="M473.7 175.9 L479.0 178.9 L484.2 181.1 L483.9 182.6 L479.0 181.1 L473.7 178.2Z" fill="#c6e6c6" stroke-width="1.3"/>
<path d="M487.9 181.6 L490.9 181.6 L490.9 183.1 L487.9 183.1Z" fill="#c6e6c6" stroke-width="1.3"/>
<path d="M487.9 184.9 L490.9 184.1 L492.0 187.9 L489.4 189.4 L487.9 187.1Z" fill="#98d29a" stroke-width="1.3"/>
<path d="M472.2 210.3 L474.5 210.6 L475.2 214.1 L473.7 217.0 L471.9 214.8Z" fill="#c6e6c6" stroke-width="1.3"/>
<path d="M495.4 186.4 L497.7 183.4 L500.7 181.1 L502.9 182.6 L503.7 186.4 L505.9 189.4 L502.9 192.4 L503.7 196.9 L501.4 199.8 L499.2 196.1 L497.7 192.4 L495.4 190.1Z" fill="#f6f8f4" stroke-width="1.3"/>
<path d="M503.7 196.9 L505.9 193.9 L509.6 192.4 L512.6 195.4 L515.6 197.6 L514.9 201.3 L511.1 200.6 L508.9 203.6 L508.1 208.8 L510.4 214.1 L512.6 219.3 L511.1 220.8 L508.9 217.8 L506.6 212.6 L504.8 205.8 L503.4 201.3Z" fill="#98d29a" stroke-width="1.3"/>
<path d="M505.9 189.4 L509.6 188.6 L512.6 190.9 L515.6 193.9 L517.1 197.6 L515.6 197.6 L512.6 195.4 L509.6 192.4 L505.9 193.9Z" fill="#c6e6c6" stroke-width="1.3"/>
<path d="M509.6 188.6 L514.1 187.9 L517.9 190.1 L518.6 193.9 L520.9 198.3 L522.3 203.6 L520.9 207.3 L517.1 210.3 L515.6 208.8 L519.4 204.3 L518.6 199.8 L517.1 197.6 L515.6 193.9 L512.6 190.9Z" fill="#c6e6c6" stroke-width="1.3"/>
<path d="M511.1 200.6 L514.9 201.3 L518.6 200.6 L519.4 204.3 L515.6 207.3 L511.9 205.8Z" fill="#98d29a" stroke-width="1.3"/>
<path d="M529.9 266.4 L533.4 263.0 L540.2 260.4 L545.3 256.2 L550.5 252.7 L553.0 253.6 L556.5 250.2 L559.9 247.6 L564.2 246.7 L568.4 248.5 L569.3 251.9 L571.9 253.6 L576.1 255.3 L577.8 251.0 L578.7 245.9 L580.4 247.6 L582.1 252.7 L584.7 257.9 L588.1 262.1 L592.4 266.4 L595.8 270.7 L597.5 275.8 L596.7 281.0 L595.0 286.1 L591.5 290.4 L587.3 292.1 L583.0 291.2 L579.6 292.9 L576.1 290.4 L572.7 287.0 L570.1 283.5 L568.4 286.1 L565.9 282.7 L562.4 280.1 L557.3 279.8 L552.2 281.0 L545.3 282.7 L540.2 285.2 L535.1 286.1 L532.5 283.5 L532.5 278.4 L530.8 273.3Z" fill="#286a26" stroke-width="1.6"/>
<path d="M581.9 296.2 L585.4 295.8 L588.2 296.7 L587.2 299.9 L585.0 301.3 L583.0 299.0Z" fill="#286a26" stroke-width="1.6"/>
<path d="M629.3 285.3 L631.4 286.0 L633.5 289.5 L636.3 290.2 L639.1 290.9 L637.7 294.4 L634.9 295.8 L632.1 295.1 L632.8 291.6 L630.7 288.4Z" fill="#5aab5c" stroke-width="1.8"/>
<path d="M631.4 295.8 L630.0 299.2 L626.5 302.7 L623.0 305.5 L619.6 305.1 L621.0 302.0 L625.1 299.2 L628.6 296.5Z" fill="#5aab5c" stroke-width="1.8"/>
<path d="M614.3 261.3 L619.6 264.1 L619.0 265.1 L614.0 262.3Z" fill="#f6f8f4" stroke-width="1.8"/>
<path d="M522.2 227.1 L525.7 223.6 L529.9 221.1 L534.2 217.7 L537.6 216.8 L538.5 220.2 L536.8 224.5 L535.1 228.8 L531.6 232.2 L527.4 232.2 L523.9 230.5Z" fill="#98d29a" stroke-width="1.8"/>
<path d="M525.7 223.6 L529.9 221.1 L534.2 217.7 L537.6 216.8 L538.1 219.4 L534.2 221.1 L529.9 223.6 L527.4 225.4Z" fill="#5aab5c" stroke-width="1.0"/>
<path d="M499.1 217.7 L502.6 218.5 L507.7 222.8 L512.0 227.9 L515.4 232.2 L516.2 235.6 L513.7 235.6 L509.4 231.3 L505.1 226.2 L500.8 221.1Z" fill="#98d29a" stroke-width="1.8"/>
<path d="M517.1 237.3 L523.1 238.2 L529.9 239.9 L536.8 241.6 L543.6 242.1 L542.8 243.3 L535.1 243.3 L528.2 242.1 L521.4 240.8 L517.1 239.0Z" fill="#98d29a" stroke-width="1.8"/>
<path d="M539.3 227.1 L543.6 225.4 L547.9 225.0 L545.3 227.9 L542.8 229.6 L544.5 234.8 L541.9 235.6 L540.5 231.3Z" fill="#98d29a" stroke-width="1.8"/>
<path d="M559.9 228.8 L564.2 227.9 L569.3 230.5 L576.1 232.2 L576.1 241.6 L571.9 239.9 L567.6 235.6 L562.4 233.1Z" fill="#98d29a" stroke-width="1.8"/>
<path d="M576.1 232.2 L583.0 235.6 L588.1 238.2 L591.5 243.3 L592.4 245.0 L587.3 242.5 L583.0 239.9 L576.1 241.6Z" fill="#f6f8f4" stroke-width="1.8"/>
<path d="M541.1 197.1 L544.5 196.3 L545.0 200.5 L543.6 203.1 L546.2 204.0 L549.6 207.4 L550.5 211.7 L551.3 215.9 L548.8 216.8 L546.2 213.4 L544.5 209.1 L542.8 204.8 L541.1 201.4Z" fill="#c6e6c6" stroke-width="1.8"/>
<path d="M535.9 212.5 L540.2 208.2 L540.5 209.3 L536.8 213.4Z" fill="#c6e6c6" stroke-width="1.8"/>
<path d="M504.3 211.7 L506.8 213.4 L510.3 217.7 L512.8 222.8 L511.1 223.6 L507.7 219.4 L504.6 215.1Z" fill="#5aab5c" stroke-width="1.8"/>
<path d="M581.9 203.7 L582.4 203.7 L582.4 204.2 L581.9 204.2Z" fill="#f6f8f4" stroke-width="0.9"/>
<path d="M570.7 210.9 L571.3 210.9 L571.3 211.4 L570.7 211.4Z" fill="#f6f8f4" stroke-width="0.9"/>
<path d="M604.6 215.2 L605.1 215.2 L605.1 215.7 L604.6 215.7Z" fill="#f6f8f4" stroke-width="0.9"/>
<path d="M613.0 217.7 L613.5 217.7 L613.5 218.3 L613.0 218.3Z" fill="#f6f8f4" stroke-width="0.9"/>
<path d="M629.8 222.5 L630.3 222.5 L630.3 223.0 L629.8 223.0Z" fill="#f6f8f4" stroke-width="0.9"/>
<path d="M633.7 229.4 L634.2 229.4 L634.2 229.9 L633.7 229.9Z" fill="#f6f8f4" stroke-width="0.9"/>
<path d="M639.9 254.4 L640.7 254.4 L640.7 255.2 L639.9 255.2Z" fill="#f6f8f4" stroke-width="0.9"/>
<path d="M616.5 262.7 L617.2 262.7 L617.2 263.3 L616.5 263.3Z" fill="#f6f8f4" stroke-width="0.9"/>
<path d="M614.3 260.9 L615.0 260.9 L615.0 261.6 L614.3 261.6Z" fill="#f6f8f4" stroke-width="0.9"/>
<path d="M618.9 264.0 L619.6 264.0 L619.6 264.7 L618.9 264.7Z" fill="#f6f8f4" stroke-width="0.9"/>
<path d="M619.5 252.6 L620.4 252.6 L620.4 253.5 L619.5 253.5Z" fill="#f6f8f4" stroke-width="0.9"/>
<path d="M604.0 239.0 L604.7 239.0 L604.7 239.7 L604.0 239.7Z" fill="#f6f8f4" stroke-width="0.9"/>
<path d="M607.4 241.3 L608.1 241.3 L608.1 242.0 L607.4 242.0Z" fill="#f6f8f4" stroke-width="0.9"/>
<path d="M610.9 243.8 L611.6 243.8 L611.6 244.5 L610.9 244.5Z" fill="#f6f8f4" stroke-width="0.9"/>
<path d="M591.5 235.5 L592.3 235.5 L592.3 236.4 L591.5 236.4Z" fill="#f6f8f4" stroke-width="0.9"/>
<path d="M594.3 234.6 L595.0 234.6 L595.0 235.3 L594.3 235.3Z" fill="#f6f8f4" stroke-width="0.9"/>
<path d="M548.3 240.3 L549.2 240.3 L549.2 241.2 L548.3 241.2Z" fill="#f6f8f4" stroke-width="0.9"/>
<path d="M551.8 239.7 L552.5 239.7 L552.5 240.4 L551.8 240.4Z" fill="#f6f8f4" stroke-width="0.9"/>
<path d="M559.5 239.6 L560.2 239.6 L560.2 240.2 L559.5 240.2Z" fill="#f6f8f4" stroke-width="0.9"/>
<path d="M553.8 226.1 L554.7 226.1 L554.7 227.0 L553.8 227.0Z" fill="#f6f8f4" stroke-width="0.9"/>
<path d="M557.8 226.7 L558.5 226.7 L558.5 227.4 L557.8 227.4Z" fill="#f6f8f4" stroke-width="0.9"/>
<path d="M546.4 241.8 L547.0 241.8 L547.0 242.5 L546.4 242.5Z" fill="#f6f8f4" stroke-width="0.9"/>
<path d="M325.9 128.9 L329.9 127.3 L333.0 128.1 L333.8 130.5 L332.6 132.9 L334.6 134.5 L333.8 136.1 L331.0 135.7 L329.1 133.7 L327.5 131.3Z" fill="#5aab5c" stroke-width="1.6"/>
<path d="M330.2 137.2 L333.8 136.5 L334.2 138.0 L333.8 139.6 L330.6 140.4Z" fill="#c6e6c6" stroke-width="1.6"/>
<path d="M333.8 136.1 L337.0 135.7 L339.4 137.2 L340.6 138.4 L339.0 140.0 L336.2 140.4 L333.0 140.8 L329.9 141.8 L328.7 142.0 L330.6 140.4 L333.8 139.6 L334.2 138.0Z" fill="#286a26" stroke-width="1.6"/>
<path d="M320.7 136.1 L323.5 134.5 L327.1 134.9 L327.5 137.2 L325.9 139.2 L322.3 140.0 L320.3 138.8Z" fill="#5aab5c" stroke-width="1.6"/>
<path d="M352.8 131.3 L355.2 129.7 L357.2 130.9 L356.0 133.7 L353.6 134.5Z" fill="#5aab5c" stroke-width="1.6"/>
<path d="M344.1 141.2 L347.3 138.8 L349.7 138.0 L348.9 141.6 L350.9 143.2 L349.7 144.8 L345.7 143.6Z" fill="#3a8a3a" stroke-width="1.3"/>
<path d="M336.2 143.6 L340.2 142.0 L343.3 142.4 L345.7 143.6 L349.7 144.8 L350.9 146.4 L349.3 148.3 L348.9 150.7 L349.7 152.7 L347.3 153.5 L344.1 153.9 L340.2 153.5 L337.0 152.3 L337.8 149.5 L337.0 147.2 L335.0 145.6Z" fill="#3a8a3a" stroke-width="1.3"/>
<path d="M323.1 154.3 L327.5 153.5 L332.2 154.3 L337.0 154.7 L341.7 155.9 L339.4 158.3 L337.8 160.6 L336.6 163.0 L333.0 164.2 L329.1 165.0 L327.1 163.0 L327.1 158.3 L323.5 157.5Z" fill="#3a8a3a" stroke-width="1.3"/>
<path d="M322.7 156.7 L326.7 157.1 L327.1 163.0 L324.3 163.8 L322.3 161.4Z" fill="#5aab5c" stroke-width="1.3"/>
<path d="M349.7 148.3 L352.0 147.6 L355.2 147.9 L358.4 147.6 L361.6 146.4 L365.5 147.2 L364.7 148.7 L361.6 149.5 L359.2 151.1 L356.8 149.9 L352.8 149.5 L349.7 150.7Z" fill="#5aab5c" stroke-width="1.3"/>
<path d="M349.7 148.3 L352.0 147.6 L355.2 147.9 L356.0 149.7 L352.8 149.5 L349.7 150.7Z" fill="#3a8a3a" stroke-width="1.3"/>
<path d="M349.7 150.7 L352.8 149.5 L356.8 149.9 L359.2 151.1 L358.4 152.7 L361.6 155.1 L364.7 157.5 L367.9 159.4 L366.3 160.6 L363.1 159.0 L360.4 157.1 L358.0 155.1 L355.2 153.5 L352.0 152.7Z" fill="#3a8a3a" stroke-width="1.3"/>
<path d="M352.4 158.6 L354.0 158.3 L354.4 161.4 L352.8 161.8Z" fill="#3a8a3a" stroke-width="1.3"/>
<path d="M352.8 155.1 L354.0 154.7 L354.0 157.1 L353.0 157.1Z" fill="#98d29a" stroke-width="1.3"/>
<path d="M360.8 163.4 L363.9 163.0 L363.1 165.0 L361.4 164.6Z" fill="#3a8a3a" stroke-width="1.3"/>
<path d="M349.7 138.0 L353.6 136.9 L358.4 136.5 L361.6 136.9 L361.6 140.0 L360.4 142.0 L359.2 144.0 L358.8 145.6 L355.2 146.0 L352.0 145.2 L350.9 143.2 L348.9 141.6Z" fill="#286a26" stroke-width="1.3"/>
<path d="M341.3 159.8 L342.4 159.8 L342.4 160.6 L341.3 160.6Z" fill="#f6f8f4" stroke-width="1.3"/>
<path d="M334.8 125.4 L335.8 125.4 L335.8 126.4 L334.8 126.4Z" fill="#f6f8f4" stroke-width="1.3"/>
<path d="M325.5 122.0 L326.7 122.0 L326.7 123.1 L325.5 123.1Z" fill="#f6f8f4" stroke-width="1.3"/>
<path d="M67.8 189.0 L70.2 189.8 L73.5 191.5 L76.0 194.8 L74.0 194.0 L71.0 191.8Z" fill="#f6f8f4" stroke-width="1.5"/>
<path d="M44.0 115.5 L47.8 115.0 L48.5 117.0 L44.5 117.5Z" fill="#5aab5c" stroke-width="1.5"/>
<g stroke="none">
<rect x="25.8" y="75.6" width="17.2" height="51.4" rx="8.6" fill="#064a06"/>
<rect x="16.6" y="92.8" width="35.8" height="17.5" rx="8.7" fill="#064a06"/>
<path d="M34.1 79.8 L29.6 87.4 L39.1 87.4Z M34.1 123.2 L29.6 115.2 L39.1 115.2Z M21.4 101.5 L29 96.9 L29 106.1Z M48 101.5 L39.9 96.9 L39.9 106.1Z" fill="#fff"/>
<rect x="25.8" y="132.8" width="17.2" height="51" rx="8.6" fill="#064a06"/>
<path d="M29.6 141.9 H38.6 M34.1 137.4 V146.4" stroke="#fff" stroke-width="2" fill="none"/>
<path d="M29.6 173.9 H38.6" stroke="#fff" stroke-width="2.4" fill="none"/>
<circle cx="34.1" cy="157.1" r="7.6" fill="#2c5a48" stroke="#9494d6" stroke-width="0.9"/>
<path d="M26.5 157.1 H41.7 M34.1 149.5 V164.7 M28 152.5 Q34.1 155 40.2 152.5 M28 161.7 Q34.1 159.2 40.2 161.7 M34.1 149.5 Q28 157.1 34.1 164.7 M34.1 149.5 Q40.2 157.1 34.1 164.7" stroke="#9494d6" stroke-width="0.7" fill="none"/>
</g>
</svg><!--/MAP-->
  <div style="position:absolute;left:9px;top:386.5px;width:145.5px;height:19.5px;background:linear-gradient(90deg,#fff 0,#fff 2%,#86b186 50%,#075807 100%)"></div>
  <div style="position:absolute;left:10px;top:386.6px;font-size:11.3px;color:#000">0</div>
  <div style="position:absolute;left:97px;top:386.6px;font-size:11.3px;color:#111">76,478</div>
  <div class="hl" style="top:415px"></div>
  <div class="t14" style="left:19px;top:425px">Report View by Selection</div>
  <div class="t14 a" style="left:602px;top:425px">Customize</div>
  <div class="hl" style="top:450px"></div>
  <div style="position:absolute;left:0;top:451px;width:690px;height:35px;background:#f4f4f4"></div>
  <div style="position:absolute;left:0;top:486px;width:690px;height:25px;background:#f9f9f9;border-bottom:1px solid #e6e6e6"></div>
  <div style="position:absolute;left:0;top:511px;width:690px;height:26px;background:#f9f9f9;border-bottom:1px solid #e6e6e6"></div>
  <div style="position:absolute;left:0;top:537px;width:690px;height:25px;background:#fff;border-bottom:1px solid #e6e6e6"></div>
  <div class="th" style="left:12px;top:454px;text-align:center">Total:<br>3&nbsp;&nbsp;</div>
  <div class="th" style="left:78px;top:461px">Research Fields</div>
  <div class="th" style="left:208px;top:454px;text-align:center">Web of Science<br>Documents&nbsp;&nbsp;</div>
  <div class="th" style="left:360px;top:461px;color:#4a7ab8">Cites <span style="display:inline-block;width:0;height:0;border-left:4px solid transparent;border-right:4px solid transparent;border-top:4px solid #5b8ec9;position:relative;top:-2px;left:1px"></span></div>
  <div class="th" style="left:471px;top:461px">Cites/Paper</div>
  <div class="th" style="left:588px;top:454px;text-align:center">Highly Cited<br>Papers&nbsp;&nbsp;</div>

  <div class="td r" style="left:0;width:56px;top:487px">1</div>
  <div class="td b a" style="left:77px;top:487px">ENGINEERING</div>
  <div class="td r" style="left:200px;width:114px;top:487px">995</div>
  <div class="td r" style="left:350px;width:101px;top:487px">8,384</div>
  <div class="td r" style="left:480px;width:84px;top:487px">8.43</div>
  <div class="bar" style="top:491px"><b>3</b></div>

  <div class="td r" style="left:0;width:56px;top:513px">2</div>
  <div class="td b a" style="left:77px;top:513px">CHEMISTRY</div>
  <div class="td r" style="left:200px;width:114px;top:513px">923</div>
  <div class="td r" style="left:350px;width:101px;top:513px">8,061</div>
  <div class="td r" style="left:480px;width:84px;top:513px">8.73</div>
  <div class="bar" style="top:516px;background:#dde3ef"><i></i><b style="color:#333">2</b></div>

  <div class="td r" style="left:0;width:56px;top:538px">0</div>
  <div class="td b a" style="left:77px;top:538px">ALL FIELDS</div>
  <div class="td r" style="left:200px;width:114px;top:538px">3,966</div>
  <div class="td r" style="left:350px;width:101px;top:538px">34,600</div>
  <div class="td r" style="left:480px;width:84px;top:538px">8.72</div>
  <div class="bar" style="top:541px"><b>17</b></div>

  <div style="position:absolute;left:34px;top:506.5px;width:650px;height:26.5px;border:2px solid #e3242b"></div>
</div>
</body></html>
